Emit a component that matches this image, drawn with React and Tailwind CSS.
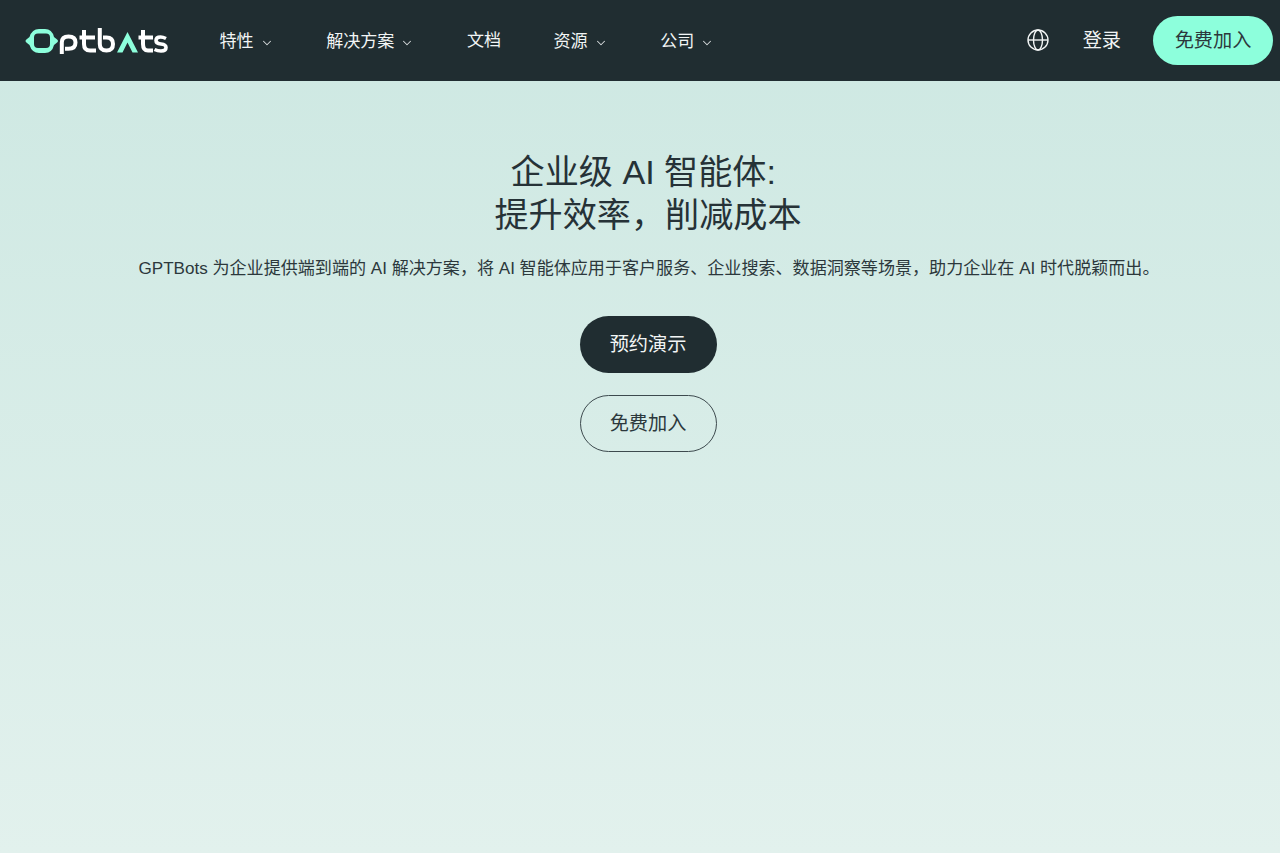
import { ChevronDown } from 'lucide-react'

const font = { fontFamily: '"Liberation Sans", "Noto Sans CJK SC", sans-serif' }

function Logo() {
  return (
    <svg width="144" height="28" viewBox="0 0 144 28" fill="none" className="shrink-0">
      <path fillRule="evenodd" d="M0.500 14 Q0.500 13 2 12 L4.500 10 Q7 2 14 2 H20 Q27 2 29 10 L31.500 12 Q33 13 33 14 Q33 15 31.500 16 L29 18 Q27 26 20 26 H14 Q7 26 4.500 18 L2 16 Q0.500 15 0.500 14 Z M13 6.500 Q9 6.500 9 10.500 V17 Q9 21 13 21 H21 Q25 21 25 17 V10.500 Q25 6.500 21 6.500 Z" fill="#8dffdc" />
      <path d="M36.800 27 V15.500 Q36.800 9.500 43.500 9.500 Q50.500 9.500 50.500 15.500 Q50.500 21.800 43.500 21.800 H40" stroke="#fff" strokeWidth="4" />
      <path d="M59 3 V17 Q59 23.500 65 23.500 H71 M54.500 10.500 H70" stroke="#fff" strokeWidth="4" />
      <path d="M74.800 1 V17 Q74.800 23.500 81.500 23.500 Q88 23.500 88 17 Q88 10.500 81.500 10.500 H78" stroke="#fff" strokeWidth="4" />
      <path d="M92 25.500 L102.500 5 L113 25.500 H107.500 L102.500 15.500 L97.500 25.500 Z" fill="#8dffdc" />
      <path d="M118 3 V17 Q118 23.500 123 23.500 H128 M113.500 10.500 H128" stroke="#fff" strokeWidth="4" />
      <path d="M141 11.500 Q138 10 135.500 10 Q131 10 131 13.500 Q131 16.500 136 17 Q141 17.500 141 20.500 Q141 24 136 24 Q132.500 24 129.500 22.500" stroke="#fff" strokeWidth="3.600" />
    </svg>
  )
}

function NavItem({ label, caret = true, className = '' }) {
  return (
    <a className={`flex items-center gap-[6px] text-[17.070px] leading-6 text-[#f2f5f5] ${className}`}>
      {label}
      {caret && <ChevronDown size={14} strokeWidth={1.800} className="mt-[3px] text-[#d5dadb]" />}
    </a>
  )
}

export default function App() {
  return (
    <div style={font} className="min-h-[853px] overflow-hidden bg-gradient-to-b from-[#cde8e2] to-[#e2f1ed] text-[#212d32]">
      <header className="flex h-[81px] items-center bg-[#202d31] pl-[25px] pr-[7px]">
        <Logo />
        <nav className="ml-[50.500px] mt-[2px] flex items-center gap-[52.500px]">
          <NavItem label="特性" />
          <NavItem label="解决方案" />
          <NavItem label="文档" caret={false} className="-mt-[2px]" />
          <NavItem label="资源" />
          <NavItem label="公司" />
        </nav>
        <div className="ml-auto flex items-center">
          <svg width="22" height="22" viewBox="0 0 22 22" fill="none" stroke="#f2f5f5" strokeWidth="1.400" className="-mt-[2px]">
            <circle cx="11" cy="11" r="10" />
            <ellipse cx="11" cy="11" rx="4.500" ry="10" />
            <path d="M1 11 H21" />
          </svg>
          <a className="ml-[34px] text-[19.200px] leading-7 text-[#f2f5f5]">登录</a>
          <a className="ml-[32px] flex h-[49px] w-[120px] items-center justify-center rounded-full bg-[#8dffdc] text-[19.200px] text-[#2c383c]">
            <span className="mt-[1px]">免费加入</span>
          </a>
        </div>
      </header>

      <main className="flex flex-col items-center pl-[16px] pt-[70px]">
        <h1 className="text-center text-[34.130px] font-normal leading-[43px] text-[#263237]">
          企业级 AI 智能体:&nbsp;
          <br />
          提升效率，削减成本
        </h1>
        <p className="ml-[2px] mt-[18px] whitespace-nowrap text-[17.070px] leading-7 text-[#2c383c]">
          GPTBots 为企业提供端到端的 AI 解决方案，将 AI 智能体应用于客户服务、企业搜索、数据洞察等场景，助力企业在 AI 时代脱颖而出。
        </p>
        <a className="mt-[33px] flex h-[57px] w-[137px] items-center justify-center rounded-full bg-[#202d31] pt-[2px] text-[19.200px] text-[#f2f5f5]">
          预约演示
        </a>
        <a className="mt-[22px] flex h-[57px] w-[137px] items-center justify-center rounded-full border border-[#3d4a4e] pt-[2px] text-[19.200px] text-[#2c383c]">
          免费加入
        </a>
      </main>
    </div>
  )
}
